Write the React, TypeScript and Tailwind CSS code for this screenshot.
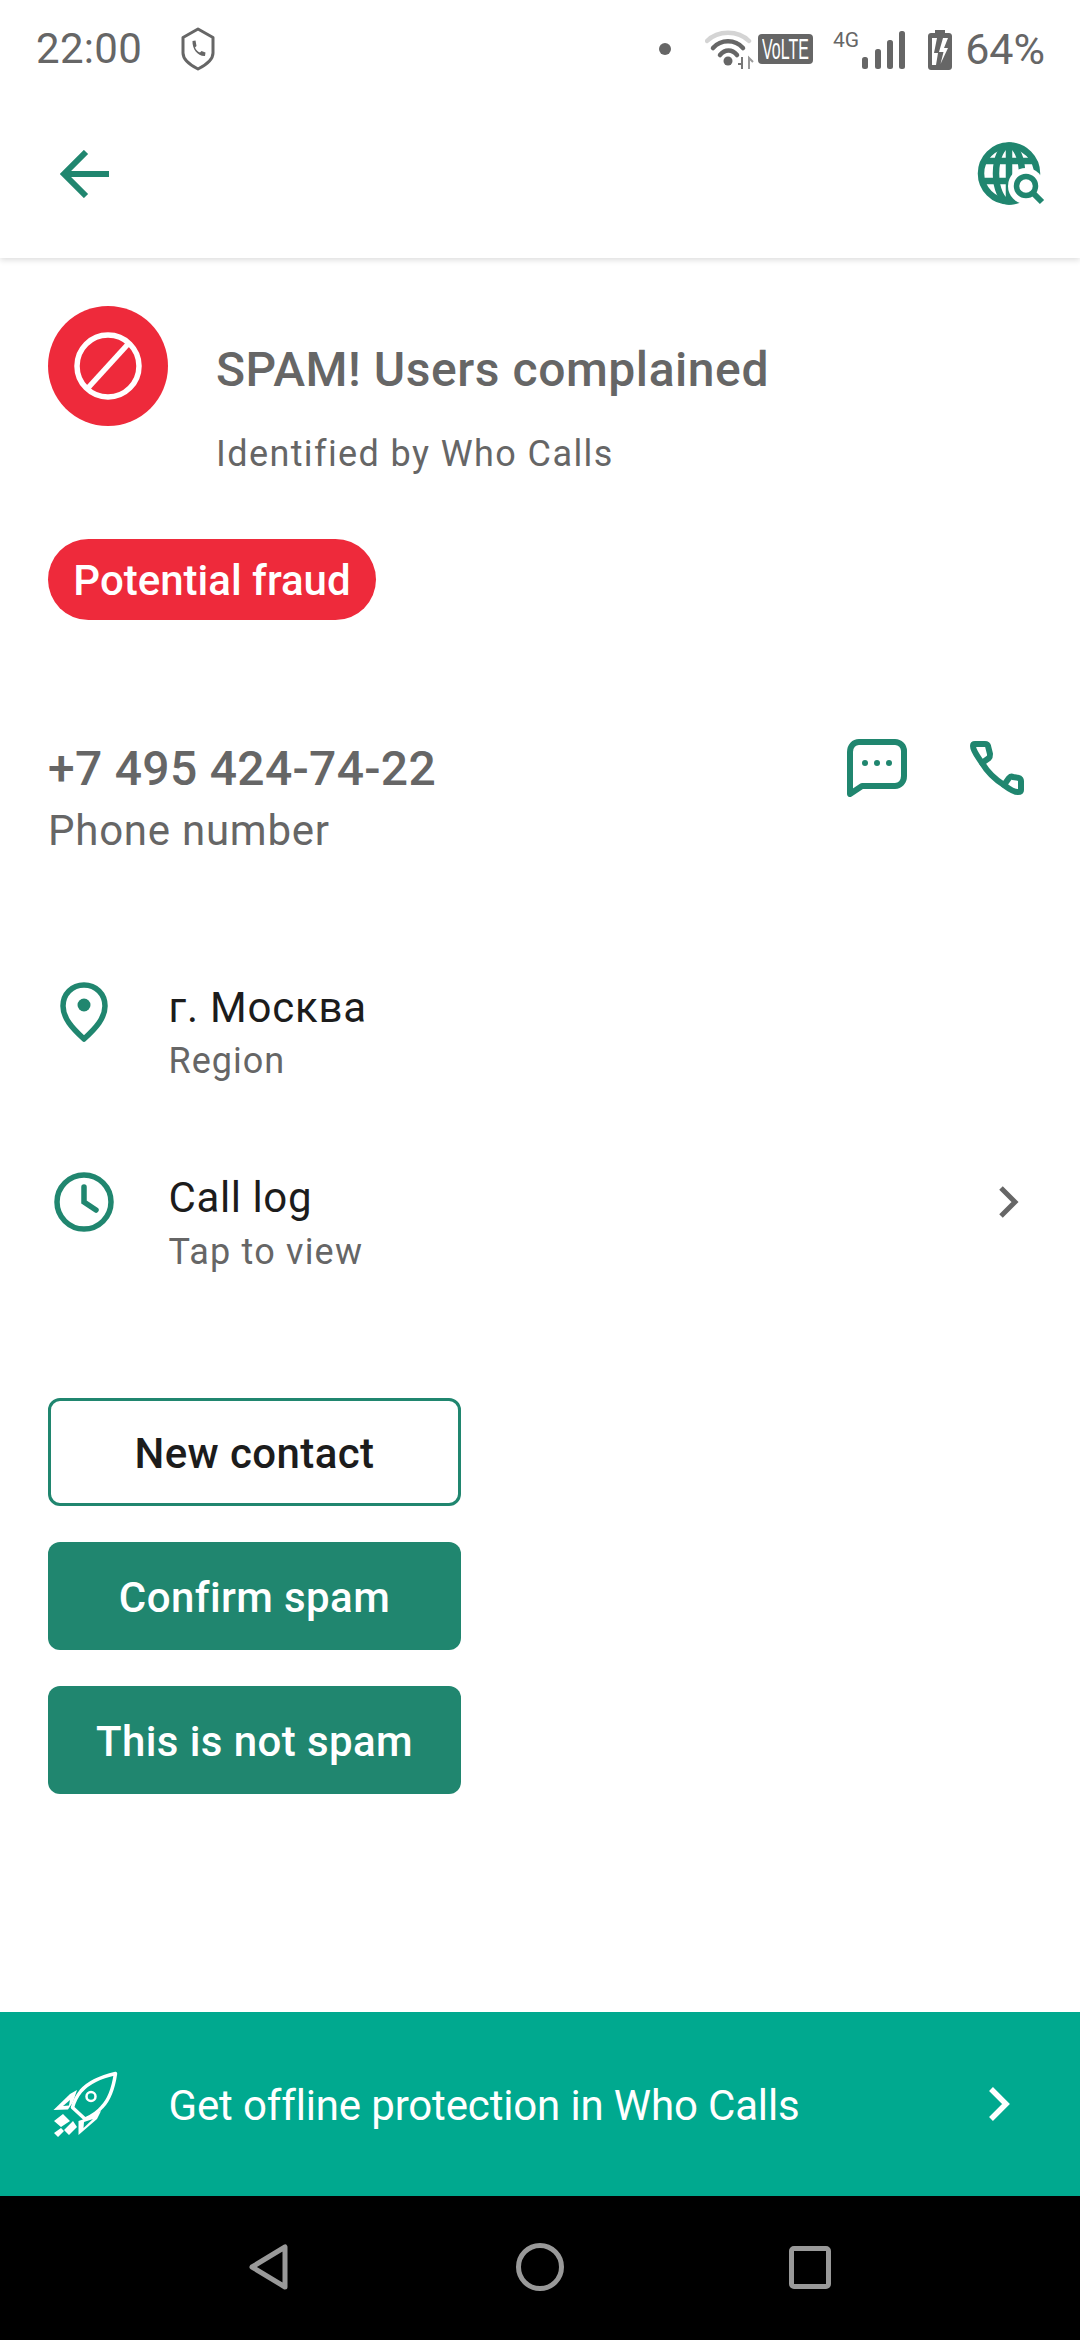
const G = "#20866f";

function Shield() {
  return (
    <svg width="34" height="44" viewBox="0 0 34 44" fill="none" className="ml-[39px]">
      <path d="M17 2 L32 10.5 V26 C32 32 25 38 17 42 C9 38 2 32 2 26 V10.5 Z" stroke="#666" strokeWidth="3" strokeLinejoin="round" />
      <path d="M11.5 14 L14.5 13.5 L15.5 19 L14 20.5 C15 23 16.5 24.5 19 25.5 L20.5 24 L24.5 25.5 L24 29 C17 29.5 11 22 11.5 14 Z" fill="#666" />
    </svg>
  );
}

function Wifi() {
  return (
    <svg width="50" height="42" viewBox="0 0 50 42" fill="none">
      <path d="M2 13 C13 2 33 2 44 13" stroke="#d4d4d4" strokeWidth="4.5" strokeLinecap="round" />
      <path d="M8 20 C16 11 30 11 38 20" stroke="#666" strokeWidth="4.5" strokeLinecap="round" />
      <path d="M15 27 C20 21 27 21 32 27" stroke="#666" strokeWidth="4.5" strokeLinecap="round" />
      <circle cx="23" cy="33" r="4.5" fill="#666" />
      <path d="M37 41 V29 M36 36 L33 36 M37 29" stroke="#777" strokeWidth="2" />
      <path d="M44 41 V30 L48 34" stroke="#999" strokeWidth="2" />
    </svg>
  );
}

function Signal() {
  return (
    <svg width="44" height="38" viewBox="0 0 44 38" fill="#666">
      <rect x="0" y="26" width="6" height="12" rx="2.5" />
      <rect x="13" y="18" width="6" height="20" rx="2.5" />
      <rect x="25" y="9" width="6" height="29" rx="2.5" />
      <rect x="37" y="0" width="6" height="38" rx="2.5" />
    </svg>
  );
}

function Battery() {
  return (
    <svg width="24" height="40" viewBox="0 0 24 40" fill="none">
      <path d="M7 0 H17 V3 H21 C22.500 3 24 4 24 6 V37 C24 39 22.500 40 21 40 H3 C1.500 40 0 39 0 37 V6 C0 4 1.500 3 3 3 H7 Z" fill="#666" />
      <path d="M4 8 H9 L6 23 H10 L8 35 H4 Z" fill="#fff" />
      <path d="M20 8 H15 L11 22 H15.500 L12.500 34 L20 18 H16 Z" fill="#fff" />
    </svg>
  );
}

function Globe() {
  return (
    <svg width="70" height="68" viewBox="0 0 70 68" fill="none" stroke={G} strokeWidth="6.500">
      <circle cx="33" cy="33.500" r="28" />
      <ellipse cx="33" cy="33.500" rx="13" ry="28" />
      <path d="M33 5 V62 M7 21 H59 M5 41 H61" />
      <circle cx="50" cy="46" r="18" fill="#fff" stroke="none" />
      <path d="M33 61 V64" />
      <circle cx="50" cy="46" r="9.500" strokeWidth="5.500" />
      <path d="M57 53 L66 62" strokeWidth="6" />
    </svg>
  );
}

function Rocket() {
  return (
    <svg width="70" height="70" viewBox="0 0 70 70" fill="none" className="shrink-0">
      <path d="M65.500 4.500 C50 8 38 14 31 22 C27 27 24 33 22.500 38.500 L35 50 C42 47 47 44 52 38 C60 30 63.500 18 65.500 4.500 Z" stroke="#fff" strokeWidth="3.500" strokeLinejoin="round" />
      <path d="M27 21 L20 25 L3.500 41 L18 40.500 L23 33 Z" fill="#fff" />
      <path d="M20 31 L13 37 L19 36.500 Z" fill="#00a98f" />
      <path d="M51 42 L47 50 L28.500 66 L28.500 52 L37 49 Z" fill="#fff" />
      <path d="M43 50 L34 53 L33.500 59 Z" fill="#00a98f" />
      <circle cx="41" cy="27.500" r="4.500" stroke="#fff" strokeWidth="2.500" />
      <path d="M13 45 L20 52 L11 58 L4 52 Z M23 52 L14 61 L19 66 L27 58 Z M11 59 L4 64 L8 68 L14 62 Z" fill="#fff" />
    </svg>
  );
}

function App() {
  return (
    <div className="flex h-[2340px] w-[1080px] flex-col overflow-hidden bg-white font-['Roboto',sans-serif] text-[#666]">
      <header className="relative z-10 h-[258px] shrink-0 bg-white shadow-[0_2px_6px_rgba(0,0,0,0.14)]">
        <div className="flex h-[98px] items-center">
          <span className="ml-[36px] text-[42px] leading-none tracking-[0.3px]">22:00</span>
          <Shield />
          <div className="ml-auto mr-[35px] flex items-center">
            <span className="mr-[34px] h-[12px] w-[12px] rounded-full bg-[#666]" />
            <Wifi />
            <span className="ml-[3px] flex h-[30px] w-[55px] items-center justify-center rounded-[4px] bg-[#666] text-white">
              <span className="inline-block scale-x-[0.55] text-[29px] leading-none [font-family:'Liberation_Sans',sans-serif]">VoLTE</span>
            </span>
            <span className="mb-[18px] ml-[20px] text-[21px] leading-none">4G</span>
            <span className="ml-[3px] mt-[2px]"><Signal /></span>
            <span className="ml-[22px] mt-[1px]"><Battery /></span>
            <span className="ml-[13px] text-[43px] leading-none">64%</span>
          </div>
        </div>
        <div className="flex h-[160px] items-center justify-between pb-[8px] pl-[60px] pr-[34px]">
          <svg width="50" height="48" viewBox="0 0 50 48" fill="none" stroke={G} strokeWidth="6">
            <path d="M49 24 H4 M26 2 L4 24 L26 46" />
          </svg>
          <Globe />
        </div>
      </header>

      <main className="flex-1 px-[48px] pt-[48px]">
        <div className="flex">
          <div className="flex h-[120px] w-[120px] items-center justify-center rounded-full bg-[#ee2a3b]">
            <svg width="68" height="68" viewBox="0 0 68 68" fill="none" stroke="#fff" strokeWidth="5.500">
              <circle cx="34" cy="34" r="31" />
              <path d="M13 57 L55 11" />
            </svg>
          </div>
          <div className="ml-[48px] pt-[35.5px]">
            <div className="text-[48px] font-medium leading-[56px] tracking-[0.55px]">SPAM! Users complained</div>
            <div className="mt-[36px] text-[36px] leading-[40px] tracking-[1.4px]">Identified by Who Calls</div>
          </div>
        </div>

        <div className="mt-[65.5px] flex h-[81px] w-[328px] items-center justify-center rounded-full bg-[#ee2a3b] pt-[1px] text-[42px] font-medium text-white">
          Potential fraud
        </div>

        <div className="mt-[119px] flex h-[56px] items-center justify-between pr-[8px]">
          <div className="pt-[3px] text-[48px] font-medium leading-[56px] tracking-[0.3px]">+7 495 424-74-22</div>
          <div className="flex items-center gap-[63px] pt-[2px]">
            <svg width="60" height="58" viewBox="0 0 60 58" fill="none">
              <path d="M3 53 V13 C3 7 7 3 12 3 H48 C53 3 57 7 57 12 V37 C57 43 53 47 48 47 H15 L3 55 Z" stroke={G} strokeWidth="6" strokeLinejoin="round" />
              <circle cx="18" cy="24" r="3" fill={G} />
              <circle cx="30" cy="24" r="3" fill={G} />
              <circle cx="42" cy="24" r="3" fill={G} />
            </svg>
            <svg width="54" height="54" viewBox="0 0 54 54" fill="none" stroke={G} strokeWidth="6" strokeLinejoin="round">
              <path d="M3 5 C3 3 4 3 5 3 H15 C17 3 18 4 18 5 L20 13 C20 15 20 16 19 17 L12 22 C8 16 3 10 3 5 Z" />
              <path d="M12 22 C18 32 26 39 34 44" />
              <path d="M34 44 L39 37 C40 36 41 35 43 36 L49 37 C50 37 51 39 51 40 V49 C51 51 50 51 48 51 C43 51 38 47 34 44 Z" />
            </svg>
          </div>
        </div>
        <div className="mt-[11.5px] text-[42px] leading-[48px] tracking-[0.75px]">Phone number</div>

        <div className="mt-[127.5px] flex">
          <div className="flex w-[120.5px] shrink-0 justify-start pl-[12px]">
            <svg width="48" height="60" viewBox="0 0 48 60" fill="none">
              <path d="M24 57 C12 46 3 36 3 24 C3 12 12 3 24 3 C36 3 45 12 45 24 C45 36 36 46 24 57 Z" stroke={G} strokeWidth="5.500" strokeLinejoin="round" />
              <circle cx="24" cy="23" r="6.500" fill={G} />
            </svg>
          </div>
          <div className="pt-[1.5px]">
            <div className="text-[42px] leading-[48px] tracking-[0.8px] text-[#1c1c1c]">г. Москва</div>
            <div className="mt-[9px] text-[36px] leading-[40px] tracking-[1px]">Region</div>
          </div>
        </div>

        <div className="mt-[91.5px] flex items-start">
          <div className="flex w-[120.5px] shrink-0 justify-start pl-[6px]">
            <svg width="60" height="60" viewBox="0 0 60 60" fill="none" stroke={G} strokeWidth="5.500" strokeLinecap="round">
              <circle cx="30" cy="30" r="27" />
              <path d="M30 15 V30 L42 38" />
            </svg>
          </div>
          <div className="flex-1 pt-[1.5px]">
            <div className="text-[42px] leading-[48px] tracking-[0.6px] text-[#1c1c1c]">Call log</div>
            <div className="mt-[10px] text-[36px] leading-[40px] tracking-[1.2px]">Tap to view</div>
          </div>
          <svg width="24" height="34" viewBox="0 0 24 34" fill="none" stroke="#666" strokeWidth="5" className="mr-[11px] mt-[13px]">
            <path d="M4 3 L18 17 L4 31" />
          </svg>
        </div>

        <div className="mt-[126.5px] flex w-[413px] flex-col gap-[36px] text-[42px] font-medium tracking-[0.4px]">
          <div className="flex h-[108px] items-center justify-center rounded-[12px] border-[3px] border-[#20866f] pt-[2px] text-[#1c1c1c]">New contact</div>
          <div className="flex h-[108px] items-center justify-center rounded-[12px] bg-[#20866f] pt-[2px] text-white">Confirm spam</div>
          <div className="flex h-[108px] items-center justify-center rounded-[12px] bg-[#20866f] pt-[2px] text-white">This is not spam</div>
        </div>
      </main>

      <div className="flex h-[184px] shrink-0 items-center bg-[#00a98f] pl-[50px] pr-[68px] text-white">
        <Rocket />
        <span className="ml-[48.5px] flex-1 pt-[3px] text-[42px] tracking-[-0.15px]">Get offline protection in Who Calls</span>
        <svg width="26" height="36" viewBox="0 0 26 36" fill="none" stroke="#fff" strokeWidth="5.500">
          <path d="M5 3 L20 18 L5 33" />
        </svg>
      </div>

      <nav className="flex h-[144px] shrink-0 items-center bg-black pb-[2px] pl-[248px]">
        <svg width="42" height="48" viewBox="0 0 42 48" fill="none" stroke="#999" strokeWidth="5" strokeLinejoin="round">
          <path d="M37 4 V44 L4 24 Z" />
        </svg>
        <span className="ml-[226px] h-[48px] w-[48px] rounded-full border-[5px] border-[#999]" />
        <span className="ml-[225px] h-[43px] w-[42px] rounded-[5px] border-[5px] border-[#999]" />
      </nav>
    </div>
  );
}

export default App;
